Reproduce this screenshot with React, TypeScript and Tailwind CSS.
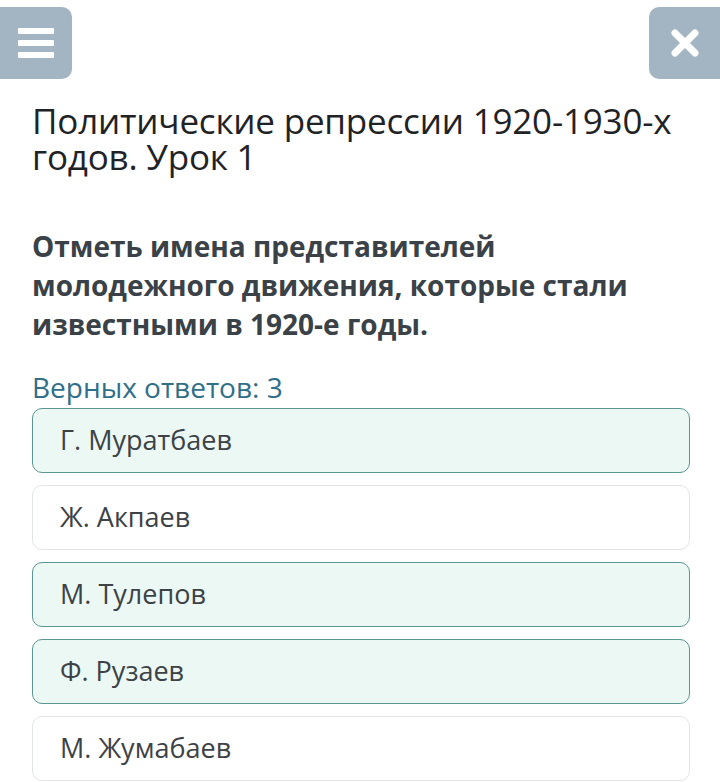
import React from "react";

const options = [
  { label: "Г. Муратбаев", checked: true },
  { label: "Ж. Акпаев", checked: false },
  { label: "М. Тулепов", checked: true },
  { label: "Ф. Рузаев", checked: true },
  { label: "М. Жумабаев", checked: false },
];

export default function App() {
  return (
    <div className="h-[782px] w-[720px] overflow-hidden bg-white font-['Open_Sans',sans-serif]">
      {/* top bar */}
      <div className="flex items-start justify-between pt-[7px]">
        <button className="flex h-[72px] w-[72px] flex-col items-center justify-center gap-[6px] rounded-r-[10px] bg-[#a3b5c3]">
          <span className="block h-[6px] w-[36px] rounded-[1px] bg-white" />
          <span className="block h-[6px] w-[36px] rounded-[1px] bg-white" />
          <span className="block h-[6px] w-[36px] rounded-[1px] bg-white" />
        </button>
        <button className="flex h-[72px] w-[71px] items-center justify-center rounded-l-[10px] bg-[#a3b5c3]">
          <svg width="30" height="30" viewBox="0 0 30 30">
            <path d="M5 5 L25 25 M25 5 L5 25" stroke="white" strokeWidth="7" strokeLinecap="round" />
          </svg>
        </button>
      </div>

      <div className="px-[32px]">
        <h1 className="mt-[24px] text-[35px] leading-[36px] tracking-[-0.2px] text-[#1f2326]">
          Политические репрессии 1920-1930-х годов. Урок 1
        </h1>

        <p className="mt-[52px] text-[28px] font-bold leading-[39px] text-[#3a4147]">
          Отметь имена представителей молодежного движения, которые стали известными в 1920-е годы.
        </p>

        <p className="mt-[24px] text-[28px] leading-[38px] text-[#2f6f88]">Верных ответов: 3</p>

        <div className="mt-[2px] flex w-[658px] flex-col gap-[12px]">
          {options.map((o) => (
            <div
              key={o.label}
              className={
                o.checked
                  ? "flex h-[65px] items-center rounded-[10px] border border-[#5b9690] bg-[#ebf8f4] pl-[27px] text-[27px] text-[#3d4246]"
                  : "flex h-[65px] items-center rounded-[10px] border border-[#e2e5e7] bg-white pl-[27px] text-[27px] text-[#3d4246]"
              }
            >
              {o.label}
            </div>
          ))}
        </div>
      </div>
    </div>
  );
}
